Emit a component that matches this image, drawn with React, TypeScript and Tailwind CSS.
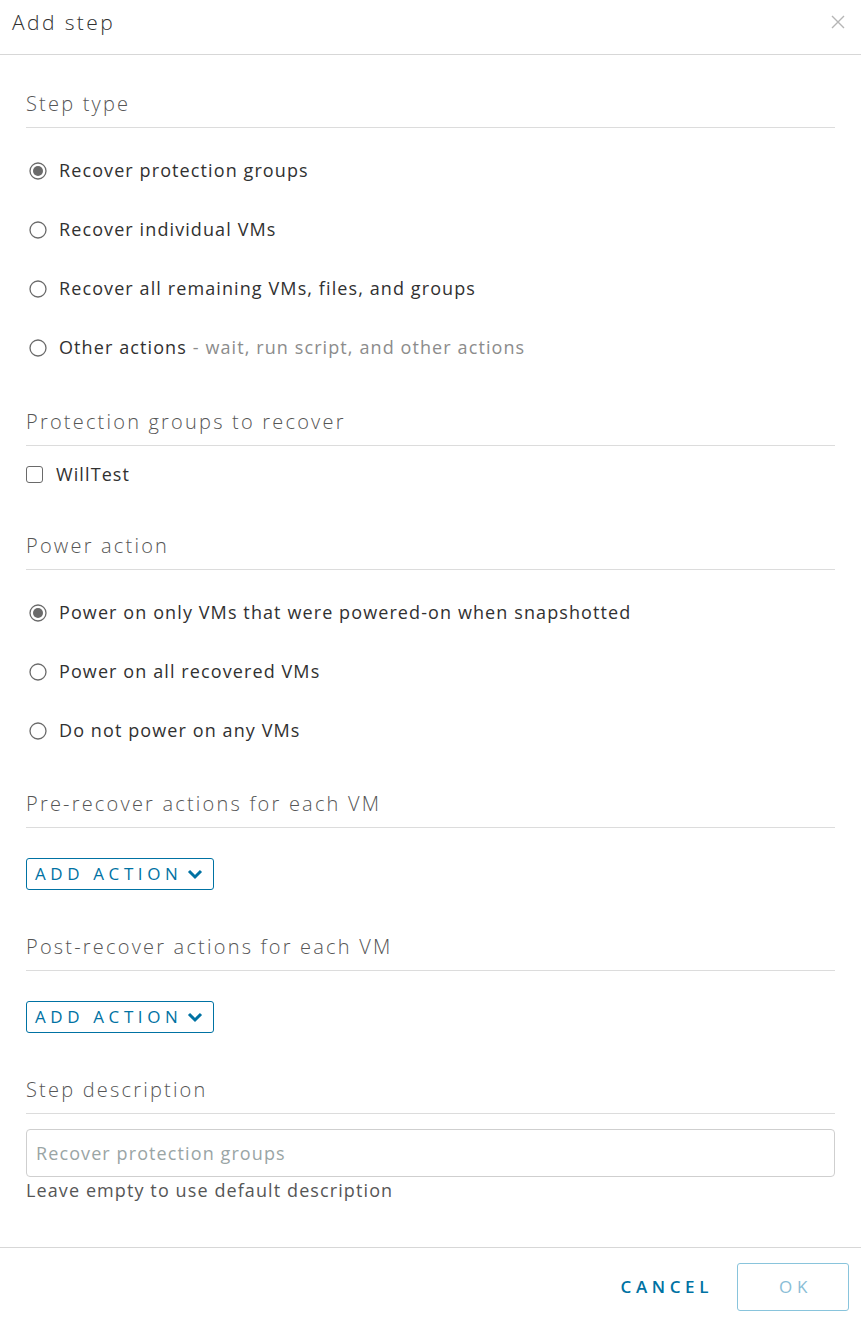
import React from 'react';

const font = { fontFamily: '"Open Sans", "Noto Sans", sans-serif' };

const Radio: React.FC<{ checked?: boolean; label: string; hint?: string }> = ({ checked, label, hint }) => (
  <div className="flex h-[59px] items-center">
    <svg width="18" height="18" viewBox="0 0 18 18" className="ml-[29px] mr-[12px] shrink-0">
      <circle cx="9" cy="9" r="8" fill="white" stroke="#6a6a6a" strokeWidth="1.3" />
      {checked && <circle cx="9" cy="9" r="5" fill="#6a6a6a" />}
    </svg>
    <span className="text-[18px] tracking-[1.1px] text-[#313131]">
      {label}
      {hint && <span className="text-[#8c8c8c]"> - {hint}</span>}
    </span>
  </div>
);

const Heading: React.FC<{ children: React.ReactNode; className?: string }> = ({ children, className }) => (
  <div className={`border-b border-[#dcdcdc] pb-[9px] ${className ?? ''}`}>
    <h2 className="text-[20px] leading-[28px] font-light tracking-[2.2px] text-[#565656]">{children}</h2>
  </div>
);

const AddAction: React.FC<{ className?: string }> = ({ className }) => (
  <button
    className={`flex h-[32px] w-[188px] items-center rounded-[3px] border border-[#0072a3] pl-[8px] text-[17px] tracking-[4.6px] text-[#0072a3] ${className ?? ''}`}
  >
    ADD ACTION
    <svg width="16" height="12" viewBox="0 0 16 12" className="ml-[5px]">
      <path d="M2 3 L8 9 L14 3" fill="none" stroke="#0072a3" strokeWidth="3" />
    </svg>
  </button>
);

export default function App() {
  return (
    <div className="min-h-[1322px] w-[861px] bg-white" style={font}>
      {/* header */}
      <div className="flex h-[55px] items-start justify-between border-b border-[#d7d7d7]">
        <h1 className="ml-[12px] mt-[7px] text-[21px] font-light tracking-[2.4px] text-[#313131]">Add step</h1>
        <svg width="14" height="14" viewBox="0 0 14 14" className="mr-[16px] mt-[15px]">
          <path d="M1 1 L13 13 M13 1 L1 13" stroke="#b5b5b5" strokeWidth="1.4" />
        </svg>
      </div>

      <div className="px-[26px] pt-[35px]">
        <Heading>Step type</Heading>
        <div className="-ml-[26px] mt-[13px]">
          <Radio checked label="Recover protection groups" />
          <Radio label="Recover individual VMs" />
          <Radio label="Recover all remaining VMs, files, and groups" />
          <Radio label="Other actions" hint="wait, run script, and other actions" />
        </div>

        <Heading className="mt-[31px]">Protection groups to recover</Heading>
        <div className="mt-[13px] flex h-[30px] items-center">
          <span className="mr-[13px] h-[17px] w-[17px] rounded-[3px] border border-[#6a6a6a]" />
          <span className="text-[18px] tracking-[1.1px] text-[#313131]">WillTest</span>
        </div>

        <Heading className="mt-[43px]">Power action</Heading>
        <div className="-ml-[26px] mt-[13px]">
          <Radio checked label="Power on only VMs that were powered-on when snapshotted" />
          <Radio label="Power on all recovered VMs" />
          <Radio label="Do not power on any VMs" />
        </div>

        <Heading className="mt-[30px]">Pre-recover actions for each VM</Heading>
        <AddAction className="mt-[30px]" />

        <Heading className="mt-[43px]">Post-recover actions for each VM</Heading>
        <AddAction className="mt-[30px]" />

        <Heading className="mt-[43px]">Step description</Heading>
        <div className="mt-[15px] flex h-[48px] items-center rounded-[4px] border border-[#cfcfcf] px-[9px]">
          <span className="text-[18px] tracking-[1.1px] text-[#9aa5a5]">Recover protection groups</span>
        </div>
        <p className="text-[18px] leading-[26px] tracking-[1.1px] text-[#565656]">Leave empty to use default description</p>
      </div>

      {/* footer */}
      <div className="mt-[44px] flex items-center justify-end border-t border-[#d7d7d7] pb-[11px] pt-[15px] pr-[12px]">
        <button className="mr-[24px] text-[17px] font-semibold tracking-[4.6px] text-[#0072a3]">CANCEL</button>
        <button className="h-[48px] w-[112px] rounded-[3px] border border-[#89c4dc] pl-[5px] text-[17px] tracking-[4.8px] text-[#89bdd6]">
          OK
        </button>
      </div>
    </div>
  );
}
